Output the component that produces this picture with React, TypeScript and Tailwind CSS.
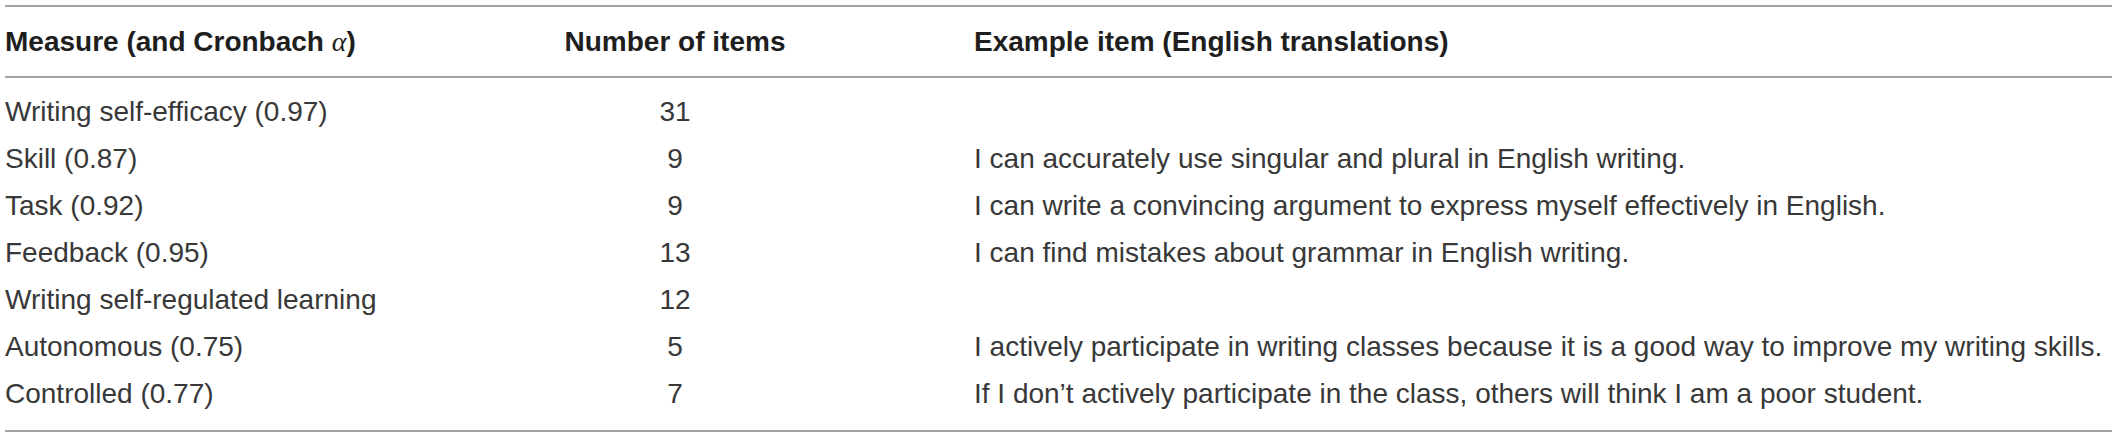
const ROWS = [
  { measure: 'Writing self-efficacy (0.97)', count: '31', example: '' },
  { measure: 'Skill (0.87)', count: '9', example: 'I can accurately use singular and plural in English writing.' },
  { measure: 'Task (0.92)', count: '9', example: 'I can write a convincing argument to express myself effectively in English.' },
  { measure: 'Feedback (0.95)', count: '13', example: 'I can find mistakes about grammar in English writing.' },
  { measure: 'Writing self-regulated learning', count: '12', example: '' },
  { measure: 'Autonomous (0.75)', count: '5', example: 'I actively participate in writing classes because it is a good way to improve my writing skills.' },
  { measure: 'Controlled (0.77)', count: '7', example: "If I don\u2019t actively participate in the class, others will think I am a poor student." },
];

export default function App() {
  return (
    <div className="w-[2118px] h-[438px] bg-white pt-[5px] font-['Liberation_Sans',Arial,sans-serif] text-[28px]">
      <div className="ml-[5px] w-[2107px] border-y-2 border-[#a3a3a3]">
        {/* header */}
        <div className="grid grid-cols-[371px_598px_1fr] border-b-2 border-[#a3a3a3] pt-[19px] pb-[18px] leading-[32px] font-bold text-[#1e1e1e] whitespace-nowrap">
          <div>
            Measure (and Cronbach{' '}
            <span className="font-normal italic font-['Liberation_Serif',serif]">α</span>)
          </div>
          <div className="text-center">Number of items</div>
          <div>Example item (English translations)</div>
        </div>
        <div className="pt-[10px] pb-[13px] text-[#383838] leading-[47px] whitespace-nowrap">
          {ROWS.map((row) => (
            <div key={row.measure} className="grid grid-cols-[371px_598px_1fr]">
              <div>{row.measure}</div>
              <div className="text-center">{row.count}</div>
              <div>{row.example}</div>
            </div>
          ))}
        </div>
      </div>
    </div>
  );
}
